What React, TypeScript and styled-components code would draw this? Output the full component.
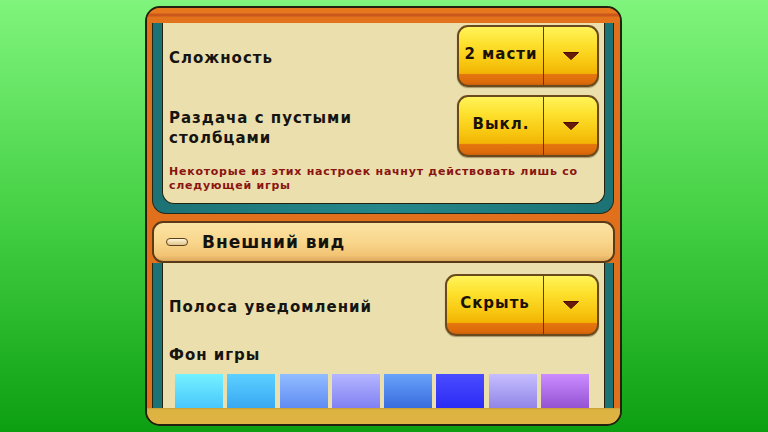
import styled, { createGlobalStyle } from 'styled-components';

const GlobalStyle = createGlobalStyle`
  html, body {
    margin: 0;
    padding: 0;
  }
  body {
    font-family: "DejaVu Sans", "Liberation Sans", sans-serif;
    background: linear-gradient(to bottom, #80f47c 0%, #45d045 50%, #0d9f12 100%);
  }
`

const swatches = [
  ['#74f2ff', '#38b4fa'],
  ['#5cd0ff', '#2a98ee'],
  ['#92bcff', '#4a78ee'],
  ['#b4b6ff', '#6c6aee'],
  ['#68a2fa', '#2656d2'],
  ['#4a4cff', '#1e1ef0'],
  ['#c6beff', '#7c6ede'],
  ['#cc8cff', '#7c3cc0'],
]

const Arrow = () => (
  <svg width="18" height="10" viewBox="0 0 18 10">
    <path d="M1.5 1.5 L16.5 1.5 L9 8.5 Z" fill="#6a1a0a" stroke="#4a0e04" strokeWidth="1" strokeLinejoin="round" />
  </svg>
)

interface IDropdownProps {
  value: string
  width: number
}

const Dropdown = ({ value, width }: IDropdownProps) => {
  return <DropButton>
    <DropValue $width={width}>{value}</DropValue>
    <DropArrow><Arrow /></DropArrow>
  </DropButton>
}

const App = () => {
  return <Page>
    <GlobalStyle />
    <Frame>
      <TopBand />
      <Body>
        <Section $top>
          <Panel $top>
            <Row>
              <Label>Сложность</Label>
              <Dropdown value="2 масти" width={86} />
            </Row>
            <Row>
              <Label>Раздача с пустыми столбцами</Label>
              <Dropdown value="Выкл." width={86} />
            </Row>
            <Note>Некоторые из этих настроек начнут действовать лишь со следующей игры</Note>
          </Panel>
        </Section>
        <Header>
          <Pill />
          <HeaderTitle>Внешний вид</HeaderTitle>
        </Header>
        <Section>
          <Panel>
            <Row>
              <Label>Полоса уведомлений</Label>
              <Dropdown value="Скрыть" width={98} />
            </Row>
            <SubLabel>Фон игры</SubLabel>
            <Swatches>
              {swatches.map(([a, b], i) => (
                <Swatch key={i} style={{ background: `linear-gradient(to bottom, ${a}, ${b})` }} />
              ))}
            </Swatches>
          </Panel>
        </Section>
      </Body>
      <BottomBar />
    </Frame>
  </Page>
}

const Page = styled.div`
  width: 768px;
  height: 432px;
  display: flex;
  padding: 6px 0 0 145px;
  box-sizing: border-box;
`

const Frame = styled.div`
  width: 477px;
  height: 420px;
  box-sizing: border-box;
  border: 2px solid #22200f;
  border-radius: 15px;
  background: #e0701c;
  overflow: hidden;
  display: flex;
  flex-direction: column;
`

const TopBand = styled.div`
  height: 15px;
  flex: none;
  background: linear-gradient(to bottom, #e8781e 0px, #e8781e 5px, #c9561a 6px, #c9561a 8px, #e2721c 9px, #e2721c 15px);
`

const Body = styled.div`
  flex: 1;
  min-height: 0;
  display: flex;
  flex-direction: column;
  padding: 0 6px 0 5px;
`

const Section = styled.div<{ $top?: boolean }>`
  background: linear-gradient(to right, #1c7274, #25878a 50%, #1c7274);
  border: 1px solid #1d2a1e;
  border-top: none;
  border-bottom: ${(props) => props.$top ? '1.5px solid #1d2a1e' : 'none'};
  border-radius: ${(props) => props.$top ? '0 0 14px 14px' : '0'};
  padding: ${(props) => props.$top ? '0 8px 9px 9px' : '0 8px 0 9px'};
  flex: ${(props) => props.$top ? 'none' : '1'};
  min-height: 0;
  display: flex;
  flex-direction: column;
`

const Panel = styled.div<{ $top?: boolean }>`
  background: #ebdfae;
  border: 1.5px solid #22220f;
  border-top: none;
  border-bottom: ${(props) => props.$top ? '1.5px solid #22220f' : 'none'};
  border-radius: ${(props) => props.$top ? '0 0 12px 12px' : '0'};
  padding: ${(props) => props.$top ? '2px 5px 10px 6px' : '11px 5px 0 6px'};
  flex: ${(props) => props.$top ? 'none' : '1'};
  overflow: hidden;
  display: flex;
  flex-direction: column;
`

const Row = styled.div`
  display: flex;
  align-items: center;
  justify-content: space-between;
  & + & {
    margin-top: 8px;
  }
`

const Label = styled.div`
  max-width: 250px;
  font-size: 15px;
  line-height: 20px;
  font-weight: bold;
  letter-spacing: 1px;
  color: #161410;
  padding-top: 3px;
`

const SubLabel = styled(Label)`
  margin-top: 6px;
`

const Note = styled.div`
  margin-top: 8px;
  font-size: 11px;
  line-height: 14px;
  font-weight: bold;
  letter-spacing: 0.75px;
  color: #8a1410;
`

const DropButton = styled.div`
  display: flex;
  height: 62px;
  box-sizing: border-box;
  border: 2px solid #6a4a1c;
  border-radius: 11px;
  overflow: hidden;
  background: linear-gradient(to bottom, #fff35a 0%, #fde02c 30%, #f8c812 60%, #f2b404 80%, #e4760e 82%, #dc6a0a 96%, #c8600c 100%);
  box-shadow: 0 1px 1px rgba(60, 40, 10, 0.4);
`

const DropValue = styled.div<{ $width: number }>`
  width: ${(props) => props.$width - 2}px;
  display: flex;
  align-items: center;
  justify-content: center;
  padding-bottom: 5px;
  font-size: 15px;
  font-weight: bold;
  letter-spacing: 1px;
  color: #1a1206;
  border-right: 1.5px solid #5a3a10;
`

const DropArrow = styled.div`
  width: 53px;
  display: flex;
  align-items: center;
  justify-content: center;
  padding-bottom: 1px;
`

const Header = styled.div`
  margin-top: 7px;
  height: 42px;
  flex: none;
  box-sizing: border-box;
  border: 2px solid #5a3a18;
  border-radius: 11px;
  background: linear-gradient(to bottom, #fbe3a4 0%, #f8d68c 50%, #f2c474 85%, #dca85c 100%);
  display: flex;
  align-items: center;
  padding-left: 12px;
  margin-right: -1px;
`

const Pill = styled.div`
  width: 20px;
  height: 6px;
  border: 1px solid #5a4020;
  border-radius: 4px;
  background: linear-gradient(to bottom, #fff6d8, #e0c48a);
  margin-right: 14px;
`

const HeaderTitle = styled.div`
  font-size: 17px;
  font-weight: bold;
  letter-spacing: 1px;
  color: #14120c;
`

const Swatches = styled.div`
  margin-top: 9px;
  margin-left: 6px;
  display: grid;
  grid-template-columns: repeat(8, 48px);
  column-gap: 4.3px;
`

const Swatch = styled.div`
  height: 48px;
`

const BottomBar = styled.div`
  height: 16px;
  flex: none;
  background: linear-gradient(to bottom, #caa036 0px, #dcb240 2px, #dfb443 100%);
`

export default App
